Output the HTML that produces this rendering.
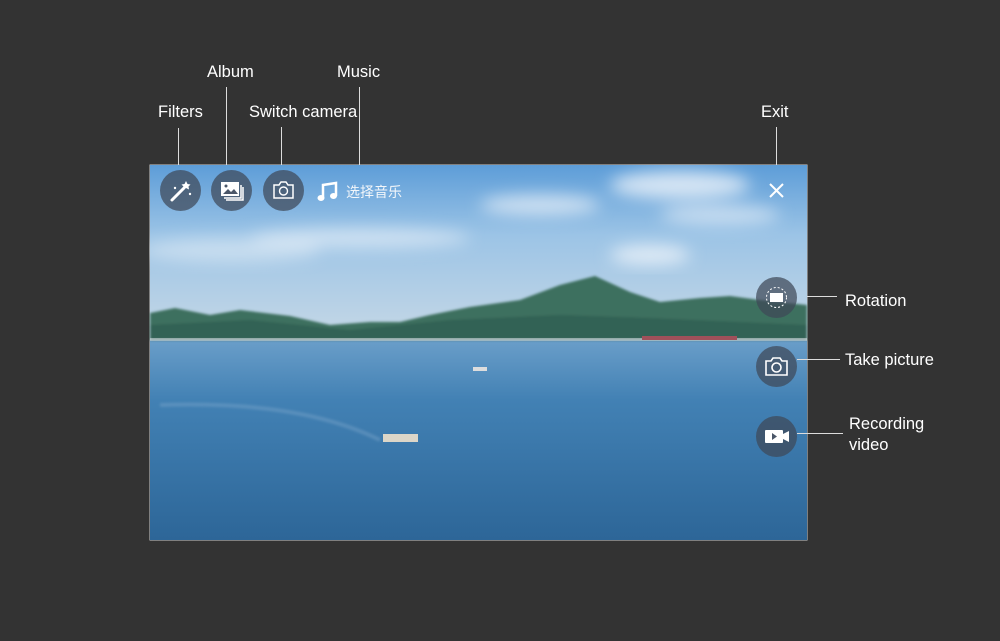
<!DOCTYPE html>
<html><head><meta charset="utf-8"><style>
body{margin:0;width:1000px;height:641px;background:#333333;position:relative;overflow:hidden;font-family:"Liberation Sans","Noto Sans CJK SC",sans-serif;}
.lbl{position:absolute;color:#fff;font-size:16.5px;white-space:nowrap}
.vl{position:absolute;width:1px;background:#ddd}
.hl{position:absolute;height:1px;background:#ddd}
.c{position:absolute;width:41px;height:41px;border-radius:50%;background:rgba(62,72,88,0.72)}
.c svg{position:absolute;left:0;top:0}
</style></head><body>
<svg style="position:absolute;left:149px;top:164px" width="659" height="377" viewBox="149 164 659 377">
<defs>
<linearGradient id="sky" x1="0" y1="0" x2="0" y2="1"><stop offset="0" stop-color="#5d9dd8"/><stop offset="0.4" stop-color="#9cc4e6"/><stop offset="1" stop-color="#c6d8e6"/></linearGradient>
<linearGradient id="sea" x1="0" y1="0" x2="0" y2="1"><stop offset="0" stop-color="#6a9ec9"/><stop offset="0.3" stop-color="#4281b4"/><stop offset="1" stop-color="#2d6698"/></linearGradient>
<filter id="b"><feGaussianBlur stdDeviation="8"/></filter>
<filter id="b2"><feGaussianBlur stdDeviation="1.2"/></filter>
</defs>
<rect x="149.5" y="164.5" width="658" height="376" fill="#ccc"/>
<rect x="150" y="165" width="657" height="176" fill="url(#sky)"/>
<g filter="url(#b)" fill="#eef4fa">
<ellipse cx="680" cy="185" rx="70" ry="14" opacity=".8"/>
<ellipse cx="540" cy="205" rx="60" ry="10" opacity=".7"/>
<ellipse cx="650" cy="255" rx="40" ry="10" opacity=".8"/>
<ellipse cx="360" cy="238" rx="110" ry="10" opacity=".6"/>
<ellipse cx="230" cy="250" rx="90" ry="12" opacity=".5"/>
<ellipse cx="720" cy="215" rx="60" ry="10" opacity=".6"/>
</g>
<rect x="150" y="340" width="657" height="200" fill="url(#sea)"/>
<g filter="url(#b2)">
<polygon fill="#3d6f5e" points="150,313 175,308 210,315 240,310 290,316 330,325 370,322 400,322 430,315 470,307 520,300 560,285 595,276 630,292 660,302 700,298 730,296 760,300 807,305 807,340 150,340"/>
<polygon fill="#2c5a50" opacity=".6" points="150,325 250,320 350,330 450,320 560,315 650,318 807,325 807,340 150,340"/>
</g>
<rect x="150" y="338" width="657" height="3" fill="#c9d3d8" opacity=".6"/>
<rect x="642" y="336" width="95" height="4" fill="#a0505a"/>
<path d="M380 440 Q300 400 160 405" stroke="#7fa8cc" stroke-width="4" fill="none" opacity=".4" filter="url(#b2)"/>
<rect x="383" y="434" width="35" height="8" fill="#dcd6c8"/>
<rect x="473" y="367" width="14" height="4" fill="#ddd"/>
</svg>
<div class="lbl" style="left:158px;top:103px">Filters</div>
<div class="lbl" style="left:207px;top:63px">Album</div>
<div class="lbl" style="left:249px;top:103px">Switch camera</div>
<div class="lbl" style="left:337px;top:63px">Music</div>
<div class="lbl" style="left:761px;top:103px">Exit</div>
<div class="lbl" style="left:845px;top:292px">Rotation</div>
<div class="lbl" style="left:845px;top:351px">Take picture</div>
<div class="lbl" style="left:849px;top:414px;line-height:21px">Recording<br>video</div>
<div class="vl" style="left:178px;top:128px;height:37px"></div>
<div class="vl" style="left:226px;top:87px;height:78px"></div>
<div class="vl" style="left:281px;top:127px;height:38px"></div>
<div class="vl" style="left:359px;top:87px;height:78px"></div>
<div class="vl" style="left:776px;top:127px;height:38px"></div>
<div class="hl" style="left:807px;top:296px;width:30px"></div>
<div class="hl" style="left:797px;top:359px;width:43px"></div>
<div class="hl" style="left:797px;top:433px;width:46px"></div>
<div class="c" style="left:160px;top:170px"><svg width="41" height="41"><path d="M12 30 L24 18" stroke="#fff" stroke-width="3" stroke-linecap="round"/><path d="M26 11 l1.5 3 3 .5-2 2 .5 3-3-1.5-3 1.5.5-3-2-2 3-.5z" fill="#fff"/><circle cx="15" cy="18" r="1.2" fill="#fff"/><circle cx="30" cy="24" r="1.2" fill="#fff"/></svg></div>
<div class="c" style="left:211px;top:170px"><svg width="41" height="41"><rect x="10" y="12" width="18" height="14" fill="#fff"/><path d="M12 24 l5-5 3 3 3-3 4 5z" fill="#4a5668"/><circle cx="15" cy="16" r="1.5" fill="#4a5668"/><path d="M30 15 v13 h-17" stroke="#fff" stroke-width="1.5" fill="none"/><path d="M32 17 v13 h-17" stroke="#fff" stroke-width="1.5" fill="none"/></svg></div>
<div class="c" style="left:263px;top:170px"><svg width="41" height="41"><path d="M11 15 h5 l2-3 h5 l2 3 h5 v13 h-19z" stroke="#fff" stroke-width="1.5" fill="none"/><circle cx="20.5" cy="21" r="4" stroke="#fff" stroke-width="1.4" fill="none"/></svg></div>
<svg style="position:absolute;left:316px;top:180px" width="24" height="24"><path d="M7 18 V5 L20 3 V16" stroke="#fff" stroke-width="2.5" fill="none"/><ellipse cx="5" cy="18" rx="3.5" ry="3" fill="#fff"/><ellipse cx="17.5" cy="16" rx="3.5" ry="3" fill="#fff"/></svg>
<div class="lbl" style="left:346px;top:182px;font-size:14px;color:#f2f6fa">选择音乐</div>
<svg style="position:absolute;left:768px;top:182px" width="17" height="17"><path d="M2 2 L15 15 M15 2 L2 15" stroke="#fff" stroke-width="2"/></svg>
<div class="c" style="left:756px;top:277px"><svg width="41" height="41"><rect x="14" y="16" width="13" height="9" fill="#fff"/><circle cx="20.5" cy="20.5" r="10" stroke="#fff" stroke-width="1" stroke-dasharray="2 2" fill="none"/></svg></div>
<div class="c" style="left:756px;top:346px"><svg width="41" height="41"><path d="M10 15 h5 l2-3 h7 l2 3 h5 v14 h-21z" stroke="#fff" stroke-width="1.6" fill="none"/><circle cx="20.5" cy="21.5" r="4.5" stroke="#fff" stroke-width="1.6" fill="none"/></svg></div>
<div class="c" style="left:756px;top:416px"><svg width="41" height="41"><rect x="9" y="14" width="18" height="13" rx="1" fill="#fff"/><path d="M27 18 l6-3 v11 l-6-3z" fill="#fff"/><path d="M16 17 v7 l5-3.5z" fill="#4a5668"/></svg></div>
</body></html>
